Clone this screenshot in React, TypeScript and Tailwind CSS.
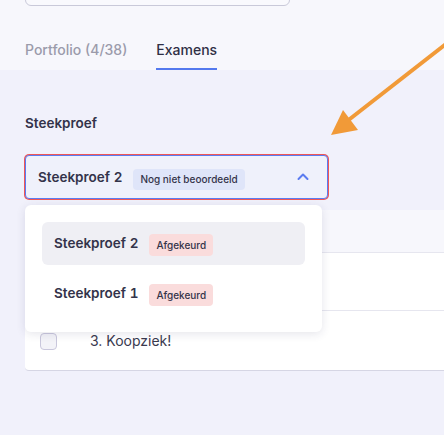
import React from "react";

const font = { fontFamily: "Inter, 'Noto Sans', sans-serif" };

const Badge: React.FC<{ tone: "blue" | "red"; children: React.ReactNode }> = ({ tone, children }) => (
  <span
    className={
      tone === "blue"
        ? "inline-flex items-center h-[21px] px-[7px] rounded-[4px] bg-[#dfe5f9] text-[10px] font-medium text-[#34344a]"
        : "inline-flex items-center h-[22px] px-[7px] rounded-[4px] bg-[#fadcdc] text-[10px] font-medium text-[#34344a]"
    }
  >
    {children}
  </span>
);

const App: React.FC = () => {
  const options = [
    { label: "Steekproef 2", active: true },
    { label: "Steekproef 1", active: false },
  ];

  return (
    <div style={font} className="relative w-[444px] h-[435px] overflow-hidden bg-[#f1f1fb] text-[#33334a]">
      <div className="flex flex-col bg-[#f7f7fc] px-[25px] h-[70px]">
        <div className="-mt-[34px] h-[40px] w-[265px] rounded-md border border-[#c9c9d9] bg-[#f9f9fd]"></div>
        <div className="mt-[34px] flex gap-[29px]">
          <div className="pb-[8px] border-b-2 border-transparent text-[14px] leading-[20px] font-medium text-[#9b9bab]">
            Portfolio (4/38)
          </div>
          <div className="pb-[8px] border-b-2 border-[#5479ee] text-[14px] leading-[20px] font-medium text-[#2f2f45]">
            Examens
          </div>
        </div>
      </div>

      <div className="px-[25px] pt-[43px]">
        <div className="text-[13.5px] leading-[20px] font-semibold text-[#33334a] mb-[22px]">Steekproef</div>

        <div className="relative w-[303px]">
          <div className="flex items-center h-[44px] mt-[1px] rounded-[4px] border border-[#5b7cf0] ring-1 ring-[#ef5757] bg-[#eff1fb] pl-[12px] pr-[17px]">
            <span className="text-[13.5px] font-semibold tabular-nums text-[#33334a]">Steekproef 2</span>
            <span className="ml-[11px]">
              <Badge tone="blue">Nog niet beoordeeld</Badge>
            </span>
            <svg className="ml-auto" width="14" height="14" viewBox="0 0 14 14" fill="none">
              <path d="M2.5 9 L7 4.5 L11.5 9" stroke="#5b7cf0" strokeWidth="2" strokeLinecap="round" strokeLinejoin="round" />
            </svg>
          </div>

          <div className="absolute z-10 left-0 top-[50px] w-[297px] rounded-[6px] bg-white p-[17px] shadow-[0_2px_10px_rgba(40,40,90,0.12)] flex flex-col gap-[7px]">
            {options.map((o, i) => (
              <div
                key={i}
                className={`flex items-center h-[43px] px-[12px] rounded-[6px] ${o.active ? "bg-[#efeff4]" : ""}`}
              >
                <span className="text-[13.5px] font-semibold tabular-nums text-[#33334a]">{o.label}</span>
                <span className="ml-[11px]">
                  <Badge tone="red">Afgekeurd</Badge>
                </span>
              </div>
            ))}
          </div>
        </div>

        <div className="mt-[11px] w-[440px] rounded-[4px] bg-white border-b border-[#d6d6e4] overflow-hidden">
          <div className="h-[43px] bg-[#f7f7fc] border-b border-[#e6e6ef]"></div>
          <div className="h-[58px] border-b border-[#e6e6ef]"></div>
          <div className="h-[59px] flex items-center">
            <div className="ml-[15px] mt-[1px] w-[17px] h-[17px] rounded-[4px] border border-[#c9c7dc] bg-[#f3f3f8]"></div>
            <span className="ml-[33px] text-[14px] text-[#3a3a4f]">3. Koopziek!</span>
          </div>
        </div>
      </div>

      <svg className="absolute left-0 top-0 pointer-events-none" width="444" height="435" viewBox="0 0 444 435">
        <line x1="446" y1="44" x2="346" y2="122" stroke="#f19a38" strokeWidth="4" />
        <polygon points="331,135 343,110 358,130" fill="#f19a38" />
      </svg>
    </div>
  );
};

export default App;
